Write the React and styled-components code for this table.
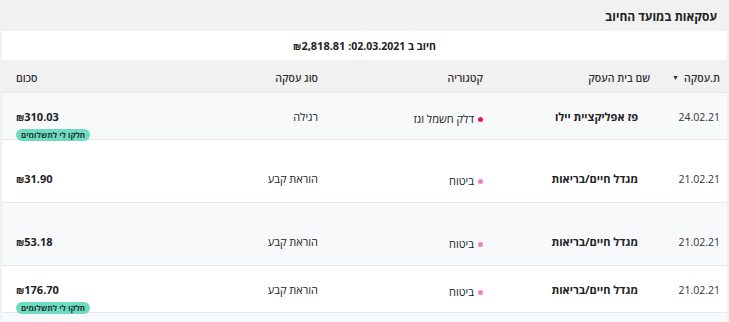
import React from "react";
import styled, { createGlobalStyle } from "styled-components";

const Global = createGlobalStyle`
  html, body { margin: 0; padding: 0; background: #f1f1f1; }
  body { font-family: "Open Sans", "Liberation Sans", "DejaVu Sans", sans-serif; color: #222; }
`;

const Page = styled.div`
  direction: rtl;
  padding: 0 2px;
`;

const Title = styled.h2`
  margin: 0;
  height: 31px;
  display: flex;
  align-items: center;
  padding: 2px 10px 0 0;
  box-sizing: border-box;
  font-size: 12px;
  font-weight: 700;
  color: #222;
`;

const Summary = styled.div`
  background: #fff;
  height: 29px;
  display: flex;
  align-items: center;
  justify-content: center;
  font-size: 10.5px;
  font-weight: 700;
  color: #222;
  padding-top: 1px;
  box-sizing: border-box;
`;

const Grid = styled.div`
  display: grid;
  grid-template-columns: 82px 155px 165px 200px 1fr;
  padding: 0 7px 0 14px;
  box-sizing: border-box;
`;

const HeaderRow = styled(Grid)`
  height: 33px;
  align-items: center;
  padding-top: 3px;
  border-bottom: 1px solid #e6e6e6;
  font-size: 10.5px;
  font-weight: 600;
  color: #333;
`;

const HeadCell = styled.div`
  margin-right: ${(p) => p.$shift || 0}px;
  display: flex;
  align-items: center;
  justify-content: ${(p) => (p.$end ? "flex-end" : "flex-start")};
  gap: 5px;
`;

const SortArrow = styled.span`
  font-size: 7px;
  color: #333;
`;

const Row = styled(Grid)`
  background: ${(p) => (p.$alt ? "#f8f9fb" : "#fff")};
  border-bottom: 1px solid #e8e8ea;
  padding-top: ${(p) => (p.$badge ? 16 : 31)}px;
  padding-bottom: ${(p) => (p.$badge ? 0 : 15)}px;
  height: ${(p) => (p.$badge ? 47 : 63)}px;
  box-sizing: border-box;
  align-items: start;
  font-size: 11px;
`;

const Cell = styled.div`
  line-height: 16px;
  text-align: right;
  font-weight: ${(p) => (p.$bold ? 700 : 400)};
  color: #222;
`;

const DateCell = styled(Cell)`
  color: #333;
  font-size: 10.5px;
`;

const CategoryCell = styled(Cell)`
  display: flex;
  align-items: center;
  gap: 4px;
  padding-top: 2px;
`;

const Dot = styled.span`
  width: 5px;
  height: 5px;
  border-radius: 50%;
  background: ${(p) => p.$color};
  flex: none;
`;

const AmountCell = styled.div`
  display: flex;
  flex-direction: column;
  align-items: flex-end;
`;

const Amount = styled.span`
  direction: ltr;
  font-weight: 700;
  line-height: 16px;
  font-size: 11px;
  color: #222;
`;

const Shekel = styled.span`
  font-size: 9px;
`;

const Badge = styled.span`
  margin-top: 3px;
  height: 12px;
  line-height: 12px;
  padding: 0 5px;
  border-radius: 7px;
  background: #6fdcc1;
  color: #173a33;
  font-size: 8px;
  font-weight: 700;
  white-space: nowrap;
`;

const Filler = styled.div`
  height: 9px;
  background: #f8f9fb;
`;

const rows = [
  { date: "24.02.21", name: "פז אפליקציית יילו", cat: "דלק חשמל וגז", dot: "#e8185f", type: "רגילה", amount: "310.03", badge: true },
  { date: "21.02.21", name: "מגדל חיים/בריאות", cat: "ביטוח", dot: "#f77dc8", type: "הוראת קבע", amount: "31.90", badge: false },
  { date: "21.02.21", name: "מגדל חיים/בריאות", cat: "ביטוח", dot: "#f77dc8", type: "הוראת קבע", amount: "53.18", badge: false },
  { date: "21.02.21", name: "מגדל חיים/בריאות", cat: "ביטוח", dot: "#f77dc8", type: "הוראת קבע", amount: "176.70", badge: true },
];

export default function App() {
  return (
    <Page>
      <Global />
      <Title>עסקאות במועד החיוב</Title>
      <Summary>
        חיוב ב 02.03.2021:&nbsp;
        <Amount as="span" style={undefined}>
          <Shekel>₪</Shekel>2,818.81
        </Amount>
      </Summary>
      <HeaderRow>
        <HeadCell>
          <span>ת.עסקה</span>
          <SortArrow>▼</SortArrow>
        </HeadCell>
        <HeadCell $shift={-12}>שם בית העסק</HeadCell>
        <HeadCell>קטגוריה</HeadCell>
        <HeadCell>סוג עסקה</HeadCell>
        <HeadCell $end>סכום</HeadCell>
      </HeaderRow>
      {rows.map((r, i) => (
        <Row key={i} $alt={i % 2 === 0} $badge={r.badge}>
          <DateCell>{r.date}</DateCell>
          <Cell $bold>{r.name}</Cell>
          <CategoryCell>
            <Dot $color={r.dot} />
            <span>{r.cat}</span>
          </CategoryCell>
          <Cell>{r.type}</Cell>
          <AmountCell>
            <Amount>
              <Shekel>₪</Shekel>
              {r.amount}
            </Amount>
            {r.badge && <Badge>חלקו לי לתשלומים</Badge>}
          </AmountCell>
        </Row>
      ))}
      <Filler />
    </Page>
  );
}
